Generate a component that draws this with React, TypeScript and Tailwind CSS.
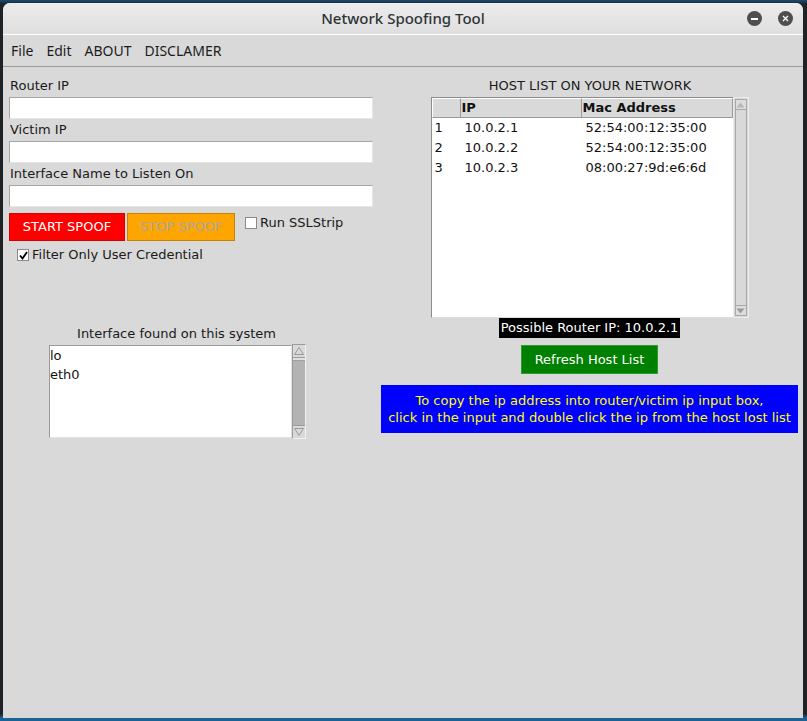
import React from "react";

const body = { fontFamily: '"DejaVu Sans", Verdana, sans-serif' };
const ui = { fontFamily: '"Noto Sans", "Open Sans", sans-serif' };

const hosts = [
  { n: "1", ip: "10.0.2.1", mac: "52:54:00:12:35:00" },
  { n: "2", ip: "10.0.2.2", mac: "52:54:00:12:35:00" },
  { n: "3", ip: "10.0.2.3", mac: "08:00:27:9d:e6:6d" },
];

const Field = ({ label }: { label: string }) => (
  <div className="flex flex-col">
    <div className="h-[18px] leading-[18px] pl-[1px] text-[13px] text-[#1a1a1a]">{label}</div>
    <div className="mt-[2px] mb-[2px] h-[22px] w-[364px] bg-white border border-[#a6a6a6] border-b-[#e6e6e6] border-r-[#e6e6e6]" />
  </div>
);

const Check = ({ checked }: { checked?: boolean }) => (
  <div className="w-[12px] h-[12px] bg-white border border-[#8a8a8a] flex items-center justify-center">
    {checked && (
      <svg width="9" height="9" viewBox="0 0 9 9">
        <path d="M1 4.5 L3.5 7.5 L8 1" stroke="#000" strokeWidth="1.8" fill="none" />
      </svg>
    )}
  </div>
);

const Arrow = ({ up, color }: { up?: boolean; color: string }) => (
  <svg width="9" height="6" viewBox="0 0 9 6">
    <path d={up ? "M0.5 5.5 L4.5 0.5 L8.5 5.5 Z" : "M0.5 0.5 L4.5 5.5 L8.5 0.5 Z"} fill={color} />
  </svg>
);

export default function App() {
  return (
    <div className="w-[807px] h-[721px] overflow-hidden pt-[3px] pl-[3px] bg-[linear-gradient(180deg,#1b4c74_0px,#1f2326_4px,#1f2326_714px,#1d6294_718px)]">
      <div className="w-[800px] h-[715px] bg-[#d9d9d9] rounded-t-[7px] flex flex-col" style={body}>
        {/* title bar */}
        <div className="h-[32px] rounded-t-[7px] bg-[linear-gradient(180deg,#ececec,#dedede)] border-b border-white flex items-center relative" style={ui}>
          <div className="flex-1 text-center text-[15px] font-medium text-[#2e3436]">Network Spoofing Tool</div>
          <div className="absolute right-[10px] top-[8px] flex gap-[16px]">
            <div className="w-[15px] h-[15px] rounded-full bg-[#4e4e4e] flex items-center justify-center">
              <div className="w-[7px] h-[2px] bg-white" />
            </div>
            <div className="w-[15px] h-[15px] rounded-full bg-[#4e4e4e] flex items-center justify-center">
              <svg width="7" height="7" viewBox="0 0 7 7">
                <path d="M1 1 L6 6 M6 1 L1 6" stroke="#fff" strokeWidth="1.3" />
              </svg>
            </div>
          </div>
        </div>
        {/* menu bar */}
        <div className="h-[32px] border-b border-[#9c9c9c] flex items-center gap-[13px] pl-[8px] text-[14px] text-[#1c1c1c]" style={ui}>
          <span>File</span>
          <span>Edit</span>
          <span>ABOUT</span>
          <span>DISCLAMER</span>
        </div>

        {/* content */}
        <div className="flex pl-[6px] pt-[10px] gap-[8px] text-[13px] text-[#1a1a1a]">
          {/* left column */}
          <div className="w-[364px] flex flex-col">
            <Field label="Router IP" />
            <Field label="Victim IP" />
            <Field label="Interface Name to Listen On" />
            <div className="flex items-start mt-[4px]">
              <div className="w-[116px] h-[28px] bg-[#ff0000] border border-[#d40000] text-white flex items-center justify-center">START SPOOF</div>
              <div className="ml-[2px] w-[108px] h-[28px] bg-[#ffa500] border border-[#c98300] text-[#a8a8a8] flex items-center justify-center">STOP SPOOF</div>
              <div className="ml-[10px] mt-[2px] flex items-center gap-[3px]">
                <Check />
                <span className="leading-[16px]">Run SSLStrip</span>
              </div>
            </div>
            <div className="flex items-center gap-[3px] ml-[8px] mt-[6px]">
              <Check checked />
              <span className="leading-[16px]">Filter Only User Credential</span>
            </div>

            <div className="ml-[40px] mt-[62px] w-[257px] flex flex-col">
              <div className="h-[18px] leading-[18px] text-center pr-[2px]">Interface found on this system</div>
              <div className="flex mt-[1px]">
                <div className="w-[243px] h-[93px] mt-[1px] bg-white border border-[#9a9a9a] border-b-[#e2e2e2] border-r-[#e2e2e2] leading-[19px] text-[#111]">
                  <div>lo</div>
                  <div>eth0</div>
                </div>
                <div className="w-[14px] h-[95px] border border-[#9a9a9a] border-r-[#f0f0f0] border-b-[#f0f0f0] flex flex-col bg-[#b3b3b3]">
                  <div className="h-[13px] bg-[#d9d9d9] flex items-center justify-center border-b border-[#9a9a9a]">
                    <svg width="10" height="8" viewBox="0 0 10 8"><path d="M0.5 7.5 L5 0.5 L9.5 7.5 Z" fill="#d9d9d9" stroke="#9a9a9a" /></svg>
                  </div>
                  <div className="h-[3px] bg-[#e0e0e0] border-b border-[#a0a0a0]" />
                  <div className="flex-1" />
                  <div className="h-[13px] bg-[#d9d9d9] flex items-center justify-center border-t border-[#9a9a9a]">
                    <svg width="10" height="8" viewBox="0 0 10 8"><path d="M0.5 0.5 L5 7.5 L9.5 0.5 Z" fill="#d9d9d9" stroke="#9a9a9a" /></svg>
                  </div>
                </div>
              </div>
            </div>
          </div>

          {/* right column */}
          <div className="w-[417px] flex flex-col items-center">
            <div className="h-[18px] leading-[18px] pl-[1px]">HOST LIST ON YOUR NETWORK</div>
            <div className="mt-[2px] flex">
              <div className="w-[302px] h-[221px] bg-white border border-[#8c8c8c] border-r-0 border-b-[#dcdcdc]">
                <div className="grid grid-cols-[29px_121px_1fr] h-[20px] bg-[#d9d9d9] font-bold text-[#111]">
                  <div className="border-r border-b border-[#9a9a9a] border-t border-l border-t-white border-l-white" />
                  <div className="border-r border-b border-[#9a9a9a] border-t border-t-white pl-[1px] leading-[18px]">IP</div>
                  <div className="border-r border-b border-[#9a9a9a] border-t border-t-white pl-[1px] leading-[18px]">Mac Address</div>
                </div>
                {hosts.map((h) => (
                  <div key={h.n} className="grid grid-cols-[29px_121px_1fr] h-[20px] leading-[20px] text-[#111]">
                    <div className="pl-[3px]">{h.n}</div>
                    <div className="pl-[4px]">{h.ip}</div>
                    <div className="pl-[4px]">{h.mac}</div>
                  </div>
                ))}
              </div>
              <div className="w-[16px] h-[221px] bg-[#d9d9d9] border border-[#ececec] flex flex-col px-[1px] py-[1px]">
                <div className="h-[11px] border border-[#a8a8a8] bg-[#dcdcdc] flex items-center justify-center">
                  <Arrow up color="#b8b8b8" />
                </div>
                <div className="flex-1 border-x border-[#a8a8a8] bg-[#d9d9d9]" />
                <div className="h-[11px] border border-[#a8a8a8] bg-[#dcdcdc] flex items-center justify-center">
                  <Arrow color="#9a9a9a" />
                </div>
              </div>
            </div>
            <div className="h-[20px] leading-[20px] bg-black text-white px-[2px] whitespace-nowrap">Possible Router IP: 10.0.2.1</div>
            <div className="mt-[7px] w-[137px] h-[29px] bg-[#008000] border border-[#2f9a2f] text-white flex items-center justify-center">Refresh Host List</div>
            <div className="mt-[11px] w-[417px] h-[48px] bg-[#0000ff] text-[#ffff00] flex flex-col items-center justify-center leading-[17px]">
              <div>To copy the ip address into router/victim ip input box,</div>
              <div>click in the input and double click the ip from the host lost list</div>
            </div>
          </div>
        </div>
      </div>
    </div>
  );
}
